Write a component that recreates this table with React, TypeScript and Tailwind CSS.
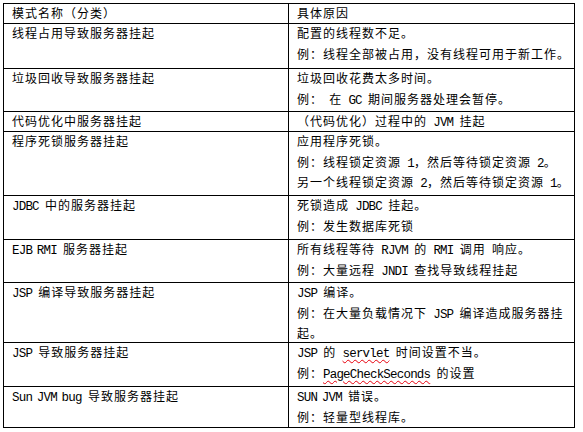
import type { ReactNode } from "react"

// latin runs: bigger glyphs but tight pitch, like SimSun half-width letters
function L({ children }: { children: ReactNode }) {
  return <span className="text-[12.5px] tracking-[-0.8px]">{children}</span>
}

function Wavy({ children }: { children: ReactNode }) {
  return (
    <span className="text-[12.5px] tracking-[-0.8px] underline decoration-wavy decoration-red-600 decoration-1 underline-offset-2">
      {children}
    </span>
  )
}

type Row = {
  h: string
  name: ReactNode
  reason: ReactNode[]
}

const rows: Row[] = [
  { h: "h-[20px]", name: "模式名称（分类）", reason: ["具体原因"] },
  {
    h: "h-[45px]",
    name: "线程占用导致服务器挂起",
    reason: ["配置的线程数不足。", "例：线程全部被占用，没有线程可用于新工作。"],
  },
  {
    h: "h-[43px]",
    name: "垃圾回收导致服务器挂起",
    reason: [
      "垃圾回收花费太多时间。",
      <>
        例： 在 <L>GC</L> 期间服务器处理会暂停。
      </>,
    ],
  },
  {
    h: "h-[20px]",
    name: "代码优化中服务器挂起",
    reason: [
      <>
        （代码优化）过程中的 <L>JVM</L> 挂起
      </>,
    ],
  },
  {
    h: "h-[64px]",
    name: "程序死锁服务器挂起",
    reason: [
      "应用程序死锁。",
      <>
        例：线程锁定资源 <L>1</L>，然后等待锁定资源 <L>2</L>。
      </>,
      <>
        另一个线程锁定资源 <L>2</L>，然后等待锁定资源 <L>1</L>。
      </>,
    ],
  },
  {
    h: "h-[44px]",
    name: (
      <>
        <L>JDBC</L> 中的服务器挂起
      </>
    ),
    reason: [
      <>
        死锁造成 <L>JDBC</L> 挂起。
      </>,
      "例：发生数据库死锁",
    ],
  },
  {
    h: "h-[43px]",
    name: (
      <>
        <L>EJB RMI</L> 服务器挂起
      </>
    ),
    reason: [
      <>
        所有线程等待 <L>RJVM</L> 的 <L>RMI</L> 调用 响应。
      </>,
      <>
        例：大量远程 <L>JNDI</L> 查找导致线程挂起
      </>,
    ],
  },
  {
    h: "h-[60px]",
    name: (
      <>
        <L>JSP</L> 编译导致服务器挂起
      </>
    ),
    reason: [
      <>
        <L>JSP</L> 编译。
      </>,
      <>
        例：在大量负载情况下 <L>JSP</L> 编译造成服务器挂
      </>,
      "起。",
    ],
  },
  {
    h: "h-[44px]",
    name: (
      <>
        <L>JSP</L> 导致服务器挂起
      </>
    ),
    reason: [
      <>
        <L>JSP</L> 的 <Wavy>servlet</Wavy> 时间设置不当。
      </>,
      <>
        例：<Wavy>PageCheckSeconds</Wavy> 的设置
      </>,
    ],
  },
  {
    h: "h-[41px]",
    name: (
      <>
        <L>Sun JVM bug</L> 导致服务器挂起
      </>
    ),
    reason: [
      <>
        <L>SUN JVM</L> 错误。
      </>,
      "例：轻量型线程库。",
    ],
  },
]

export default function App() {
  return (
    <div className="w-[583px] h-[432px] bg-white overflow-hidden pt-[3px] pl-[3px]">
      <div
        className="grid grid-cols-[285px_286px] w-[572px] border-l border-t border-black text-black text-[12px] leading-[20.5px] tracking-[1px] [word-spacing:-2px]"
        style={{ fontFamily: '"Liberation Mono", "Noto Sans CJK SC", monospace' }}
      >
        {rows.map((row, i) => (
          <div key={i} className="contents">
            <div className={`${row.h} border-r border-b border-black pl-[8px] pt-[1px] whitespace-nowrap`}>
              {row.name}
            </div>
            <div className={`${row.h} border-r border-b border-black pl-[8px] pt-[1px] whitespace-nowrap`}>
              {row.reason.map((line, j) => (
                <div key={j}>{line}</div>
              ))}
            </div>
          </div>
        ))}
      </div>
    </div>
  )
}
